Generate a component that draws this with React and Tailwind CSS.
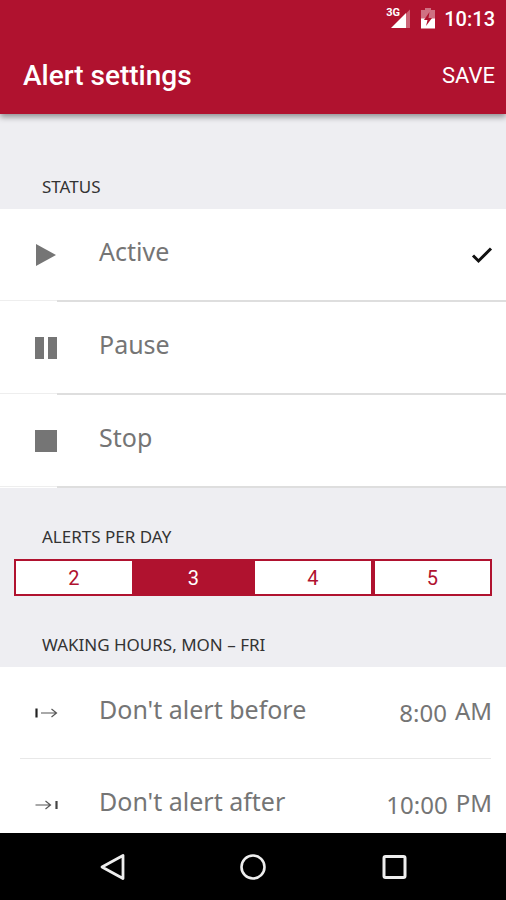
import React from 'react'

const STATUSES = ['Active', 'Pause', 'Stop']
const COUNTS = ['2', '3', '4', '5']
const HOURS = [
  { label: "Don't alert before", time: '8:00', period: 'AM', before: true },
  { label: "Don't alert after", time: '10:00', period: 'PM', before: false },
]

function SignalIcon() {
  return (
    <svg className="w-[26px] h-6" viewBox="0 0 26 24" fill="#fff" aria-hidden="true">
      <path d="M20 6.500L24 2.500V21H20Z" opacity="0.35" />
      <path d="M5 21L20 6V21Z" />
    </svg>
  )
}

function BatteryIcon() {
  return (
    <svg className="w-4 h-6" viewBox="0 0 16 24" fill="#fff" aria-hidden="true">
      <path d="M5 1H11V3H15V12H1V3H5Z" opacity="0.4" />
      <path d="M1 11.500H15V21.500H1Z" />
      <path d="M9.500 5L4 13H7.500L6 19L12 11H8.500Z" fill="#b0122f" />
    </svg>
  )
}

function StatusIcon({ name }) {
  return (
    <svg className="w-[22px] h-[22px]" viewBox="0 0 22 22" fill="#757575" aria-hidden="true">
      {name === 'Active' && <path d="M1 0L21 11L1 22Z" />}
      {name === 'Pause' && <path d="M0 0H9V22H0ZM13 0H22V22H13Z" />}
      {name === 'Stop' && <path d="M0 0H22V22H0Z" />}
    </svg>
  )
}

function LimitIcon({ before }) {
  return (
    <svg className="w-[24px] h-3" viewBox="0 0 24 12" fill="none" stroke="#555" strokeWidth="1.200" aria-hidden="true">
      {before ? (
        <>
          <path d="M1.500 1.500V10.500" stroke="#222" strokeWidth="2.200" />
          <path d="M6 6H21.500M16.500 2L21.500 6L16.500 10" />
        </>
      ) : (
        <>
          <path d="M0.500 6H15.500M10.500 2L15.500 6L10.500 10" />
          <path d="M21.500 2V10" stroke="#444" strokeWidth="2.200" />
        </>
      )}
    </svg>
  )
}

function SectionTitle({ id, children }) {
  return (
    <h2 id={id} className="px-[42px] text-[17px] leading-5 text-[#333]">
      {children}
    </h2>
  )
}

export default function App() {
  const [status, setStatus] = React.useState('Active')
  const [count, setCount] = React.useState('3')

  return (
    <div className="h-screen flex flex-col overflow-hidden bg-[#eeeef2] font-['Noto_Sans',sans-serif]">
      <header className="relative z-10 shrink-0 bg-[#b0122f] text-white shadow-[0_3px_6px_rgba(0,0,0,0.4)] font-[Roboto,sans-serif]">
        {/* System status bar */}
        <div className="flex h-[38px] items-center justify-end pr-[11px]">
          <div className="relative mr-2">
            <SignalIcon />
            <span className="absolute left-0 top-0 text-[11px] leading-3 font-bold">3G</span>
          </div>
          <BatteryIcon />
          <span className="ml-2 text-[20px] leading-6 font-medium">10:13</span>
        </div>
        {/* App bar */}
        <div className="flex h-[76px] items-center justify-between pl-[23px] pr-[11px]">
          <h1 className="text-[28px] leading-8 font-medium">Alert settings</h1>
          <button type="button" className="text-[22px] leading-8">SAVE</button>
        </div>
      </header>

      <main className="min-h-0 flex-1 overflow-hidden">
        <section className="pt-[63px]" role="radiogroup" aria-labelledby="status-title">
          <SectionTitle id="status-title">STATUS</SectionTitle>
          <div className="mt-3 bg-white">
            {STATUSES.map(name => (
              <label key={name} className="block cursor-pointer">
                <input
                  type="radio"
                  name="status"
                  className="sr-only"
                  checked={status === name}
                  onChange={() => setStatus(name)}
                />
                <span className="flex h-[91px] items-center pl-[35px] pr-[13px]">
                  <StatusIcon name={name} />
                  <span className="ml-[42px] flex-1 pb-2 text-[25px] leading-8 text-[#757575]">{name}</span>
                  {status === name && (
                    <svg className="w-[22px] h-[18px]" viewBox="0 0 22 18" fill="none" stroke="#111" strokeWidth="3" aria-hidden="true">
                      <path d="M2 9.500L7.500 15L20 2.500" />
                    </svg>
                  )}
                </span>
                <span className="flex h-[2px]">
                  <span className="h-px w-[57px] bg-[#eeeeee]" />
                  <span className="flex-1 bg-[#dedede]" />
                </span>
              </label>
            ))}
          </div>
        </section>

        <section className="pt-[39px]" role="radiogroup" aria-labelledby="count-title">
          <SectionTitle id="count-title">ALERTS PER DAY</SectionTitle>
          <div className="mx-[14px] mt-3 grid grid-cols-4 bg-[#b0122f]">
            {COUNTS.map(n => (
              <label key={n} className="cursor-pointer">
                <input
                  type="radio"
                  name="count"
                  className="peer sr-only"
                  checked={count === n}
                  onChange={() => setCount(n)}
                />
                <span className="flex h-[37px] items-center justify-center border-2 border-[#b0122f] bg-white font-[Roboto,sans-serif] text-[20px] leading-6 text-[#b0122f] peer-checked:bg-[#b0122f] peer-checked:text-white">
                  {n}
                </span>
              </label>
            ))}
          </div>
        </section>

        <section className="pt-[39px]">
          <SectionTitle>WAKING HOURS, MON – FRI</SectionTitle>
          <div className="mt-3 bg-white">
            {HOURS.map(row => (
              <div key={row.label}>
                <button type="button" className="flex h-[91px] w-full items-center pl-[35px] pr-[14px] text-left text-[24px] leading-8 text-[#757575]">
                  <LimitIcon before={row.before} />
                  <span className="ml-10 flex-1 pb-2 text-[25px]">{row.label}</span>
                  <span>{row.time}</span>
                  <span className="ml-2 pb-1">{row.period}</span>
                </button>
                <div className="ml-5 mr-[15px] h-px bg-[#e8e8e8]" />
              </div>
            ))}
          </div>
        </section>
      </main>

      {/* System navigation */}
      <nav className="flex h-[67px] shrink-0 items-center justify-center gap-[113px] bg-black">
        <button type="button" aria-label="Back">
          <svg className="w-7 h-7" viewBox="0 0 28 28" fill="none" stroke="#eee" strokeWidth="2.800" strokeLinejoin="round">
            <path d="M25 2.500V25.500L4 14Z" />
          </svg>
        </button>
        <button type="button" aria-label="Home">
          <svg className="w-7 h-7" viewBox="0 0 28 28" fill="none" stroke="#eee" strokeWidth="2.600">
            <circle cx="14" cy="14" r="11.500" />
          </svg>
        </button>
        <button type="button" aria-label="Recent apps">
          <svg className="w-7 h-7" viewBox="0 0 28 28" fill="none" stroke="#eee" strokeWidth="3">
            <rect x="4" y="3.500" width="21" height="21" rx="1.500" />
          </svg>
        </button>
      </nav>
    </div>
  )
}
